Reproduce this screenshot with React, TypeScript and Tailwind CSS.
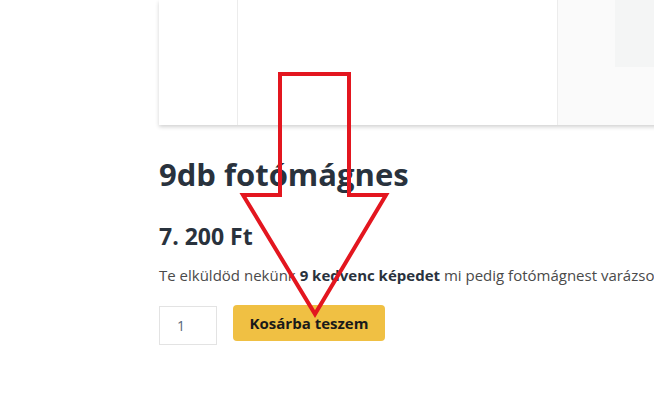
export default function App() {
  return (
    <main className="relative h-[418px] w-[654px] overflow-hidden bg-white font-['Open_Sans',sans-serif]">
      <div className="pl-[159px]">
        {/* product gallery card (top cut off) */}
        <div className="flex h-[125px] w-[560px] bg-white shadow-[0_2px_4px_rgba(0,0,0,0.18)]">
          <div className="w-[79px] border-r border-[#ececec]" />
          <div className="w-[320px] border-r border-[#ececec]" />
          <div className="flex flex-1 justify-end bg-[#fafafa] pl-[57px]">
            <div className="h-[67px] flex-1 bg-[#f4f5f5]" />
          </div>
        </div>

        <h1 className="mt-[29px] text-[31px] font-bold leading-[40px] text-[#29323d]">9db fotómágnes</h1>

        <div className="mt-[27px] text-[23px] font-bold leading-[30px] text-[#29323d]">7. 200 Ft</div>

        <p className="mt-[13px] whitespace-nowrap text-[15px] leading-[22px] text-[#4a4a4a]">
          Te elküldöd nekünk <b className="text-[#29323d]">9 kedvenc képedet</b> mi pedig fotómágnest varázsolunk belőlük
        </p>

        <div className="mt-[19px] flex items-start gap-[16px]">
          <div className="mt-[1px] flex h-[39px] w-[58px] items-center pl-[17px] text-[14px] text-[#55657a] border border-[#e3e3e3]">1</div>
          <button className="h-[36px] w-[152px] rounded-[4px] bg-[#f0c043] text-[15px] font-bold text-[#1a1a1a]">Kosárba teszem</button>
        </div>
      </div>

      {/* red arrow annotation */}
      <svg className="pointer-events-none absolute left-0 top-0" width="654" height="418" viewBox="0 0 654 418">
        <polygon
          points="280,74 349,74 349,195 386,195 315,314 243,195 280,195"
          fill="none"
          stroke="#e3161f"
          strokeWidth="4"
          strokeLinejoin="miter"
        />
      </svg>
    </main>
  );
}
